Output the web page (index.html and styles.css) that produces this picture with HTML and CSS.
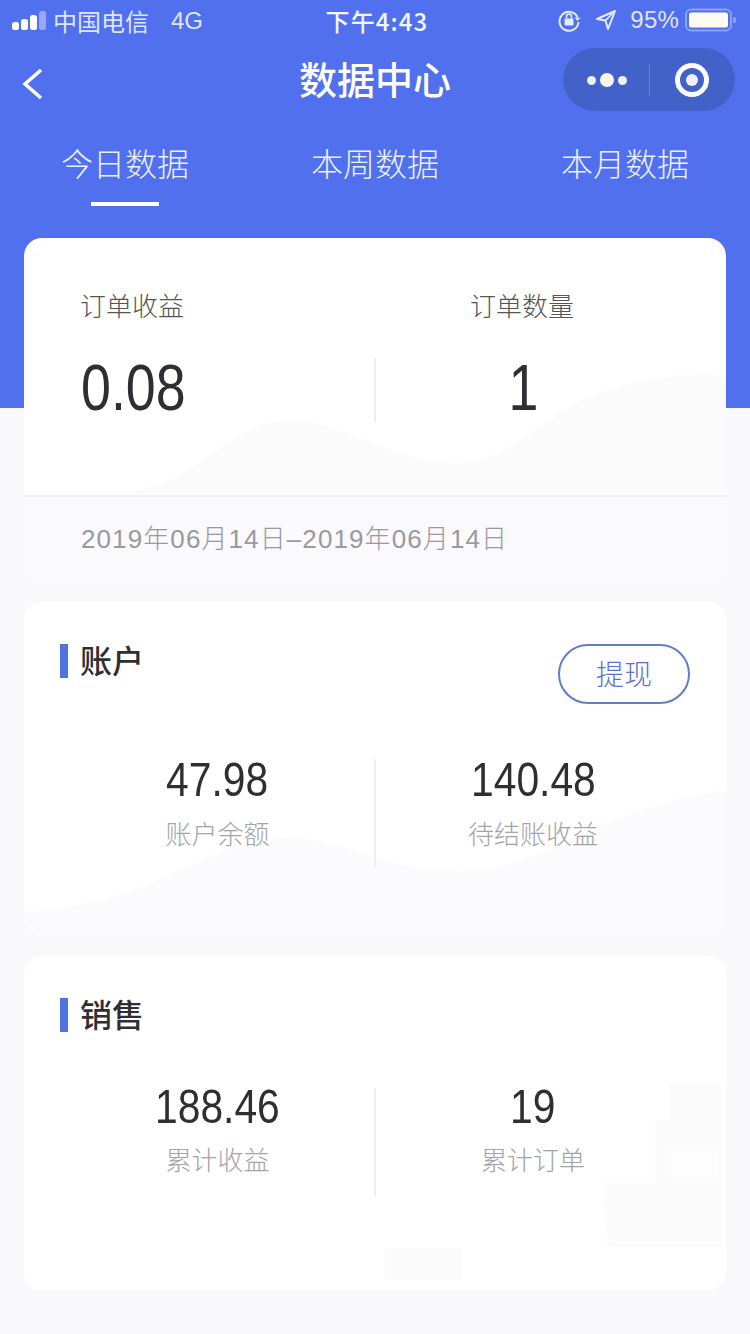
FILE: index.html
```html
<!DOCTYPE html>
<html lang="zh-CN">
<head>
<meta charset="utf-8">
<title>数据中心</title>
<link rel="stylesheet" href="styles.css">
</head>
<body>
<div class="page">
  <header class="hero">
    <div class="status">
      <div class="status-left">
        <svg class="signal" width="36" height="20" viewBox="0 0 36 20"><rect x="0" y="12" width="7" height="8" rx="2.5" fill="#fff"/><rect x="9" y="9" width="7" height="11" rx="2.5" fill="#fff"/><rect x="18" y="5" width="7" height="15" rx="2.5" fill="#fff"/><rect x="27" y="1" width="7" height="19" rx="2.5" fill="#fff" opacity=".4"/></svg>
        <span class="carrier">中国电信</span>
        <span class="net">4G</span>
      </div>
      <div class="time">下午4:43</div>
      <div class="status-right">
        <svg width="24" height="24" viewBox="0 0 24 24" fill="none"><path d="M20.5 9A9.5 9.5 0 1 0 21.5 14" stroke="#e6ebfb" stroke-width="2"/><path d="M23.5 9.5 20.5 13 17.5 9.5z" fill="#e6ebfb"/><rect x="7.5" y="10.5" width="9" height="7" rx="1" fill="#e6ebfb"/><path d="M9.5 10.5V8.5a2.5 2.5 0 0 1 5 0v2" stroke="#e6ebfb" stroke-width="1.6"/></svg>
        <svg class="arrow" width="22" height="22" viewBox="0 0 22 22" fill="none"><path d="M20 2 2 10l8.5 1.5L13 20z" stroke="#e6ebfb" stroke-width="2" stroke-linejoin="round"/><path d="M20 2 10.5 11.5" stroke="#e6ebfb" stroke-width="1.6"/></svg>
        <span class="pct">95%</span>
        <svg class="battery" width="52" height="24" viewBox="0 0 52 24"><rect x="1" y="1.5" width="45" height="21" rx="5" fill="none" stroke="#8ea2f2" stroke-width="2"/><rect x="4" y="4.5" width="39" height="15" rx="2.5" fill="#fffdf2"/><rect x="48" y="9" width="3" height="6" rx="1.5" fill="#8ea2f2"/></svg>
      </div>
    </div>
    <div class="nav">
      <svg class="back" width="26" height="38" viewBox="0 0 26 38" fill="none"><path d="M21 5 5 19l16 14" stroke="#fff" stroke-width="3.5"/></svg>
      <h1 class="nav-title">数据中心</h1>
      <div class="capsule">
        <div class="capsule-dots"><i class="dot"></i><i class="dot dot-big"></i><i class="dot"></i></div>
        <div class="capsule-target"><i class="target-dot"></i></div>
      </div>
    </div>
    <div class="tabs">
      <div class="tab tab-active">今日数据</div>
      <div class="tab">本周数据</div>
      <div class="tab">本月数据</div>
    </div>
  </header>

  <main class="cards">
    <section class="card card-today">
      <svg class="deco" width="702" height="344" viewBox="0 0 702 344"><path d="M96 257C120 250 143 249 175 225S235 182 263 182C320 182 370 225 431 225C490 225 525 170 576 155C620 140 660 134 702 137V257Z" fill="#fbfbfc"/></svg>
      <div class="today-grid">
        <div class="today-label">订单收益</div>
        <div class="today-label today-right">订单数量</div>
        <div class="today-value"><span class="num num-left">0.08</span></div>
        <div class="today-value today-right today-divider"><span class="num">1</span></div>
      </div>
      <div class="today-date">2019年06月14日–2019年06月14日</div>
    </section>

    <section class="card card-account">
      <svg class="deco" width="702" height="334" viewBox="0 0 702 334"><path d="M0 310C50 305 85 298 119 285C170 262 220 235 263 235C300 235 330 250 359 258S420 270 454 268C510 262 550 232 598 215C640 200 670 192 702 188V334H0Z" fill="#fbfbfe"/></svg>
      <div class="card-head">
        <h2 class="card-title">账户</h2>
        <div class="btn">提现</div>
      </div>
      <div class="stats">
        <div class="stat"><span class="num num-md">47.98</span><span class="stat-label">账户余额</span></div>
        <div class="stat stat-divider"><span class="num num-md">140.48</span><span class="stat-label">待结账收益</span></div>
      </div>
    </section>

    <section class="card card-sales">
      <svg class="deco" width="702" height="334" viewBox="0 0 702 334"><path d="M646 127H698V291H584L579 227H631V164H646Z" fill="#fbfbfc"/><rect x="646" y="191" width="48" height="33" fill="#fdfdfe"/><rect x="361" y="292" width="77" height="32" fill="#fbfbfc"/></svg>
      <div class="card-head card-head-sales">
        <h2 class="card-title">销售</h2>
      </div>
      <div class="stats">
        <div class="stat"><span class="num num-md">188.46</span><span class="stat-label">累计收益</span></div>
        <div class="stat stat-divider"><span class="num num-md">19</span><span class="stat-label">累计订单</span></div>
      </div>
    </section>
  </main>
</div>
</body>
</html>
```

FILE: styles.css
```css
* { box-sizing: border-box; }
html, body { margin: 0; padding: 0; }
body {
  background: #f9f9fb;
  font-family: "Noto Sans CJK SC", "Liberation Sans", sans-serif;
  color: #333;
}
.page { width: 750px; height: 1334px; overflow: hidden; }

/* hero */
.hero { height: 408px; background: #5070ee; color: #fff; }

.status {
  height: 40px;
  padding: 0 13px 0 12px;
  display: grid;
  grid-template-columns: 1fr auto 1fr;
  align-items: center;
  font-size: 24px;
  color: #dfe5fb;
  font-family: "Liberation Sans", "Noto Sans CJK SC", sans-serif;
}
.status-left { display: flex; align-items: center; }
.signal { margin-right: 5px; }
.carrier { font-family: "Noto Sans CJK SC", sans-serif; }
.net { margin-left: 22px; padding-top: 1px; }
.time {
  margin-left: 5px;
  color: #f4f6fe;
  font-family: "Noto Sans CJK SC", sans-serif;
  font-weight: 500;
  letter-spacing: 1.1px;
}
.status-right { display: flex; align-items: center; justify-content: flex-end; }
.arrow { margin-left: 14px; }
.pct { margin-left: 13px; letter-spacing: .2px; }
.battery { margin-left: 6px; }

.nav {
  height: 80px;
  position: relative;
  display: flex;
  align-items: center;
  justify-content: center;
  padding-bottom: 4px;
}
.back { position: absolute; left: 20px; top: 25px; }
.nav-title { margin: 0; font-size: 38px; font-weight: 500; line-height: 1; }
.capsule {
  position: absolute;
  left: 563px;
  top: 8px;
  width: 172px;
  height: 63px;
  border-radius: 32px;
  background: #4362c9;
  display: flex;
  align-items: center;
}
.capsule-dots {
  width: 87px;
  height: 32px;
  border-right: 1px solid #6a84d8;
  display: flex;
  align-items: center;
  justify-content: center;
  gap: 4px;
  padding-left: 2px;
  padding-top: 1px;
}
.dot { width: 9px; height: 9px; border-radius: 50%; background: #eef1fb; }
.dot-big { width: 14px; height: 14px; background: #fdf9e8; }
.capsule-target {
  margin-left: 25px;
  width: 34px;
  height: 34px;
  border-radius: 50%;
  border: 5px solid #fbfbfe;
  display: flex;
  align-items: center;
  justify-content: center;
}
.target-dot { width: 12px; height: 12px; border-radius: 50%; background: #eef0fb; }

.tabs { height: 86px; display: grid; grid-template-columns: repeat(3, 1fr); }
.tab {
  position: relative;
  text-align: center;
  font-size: 32px;
  line-height: 46px;
  padding-top: 19px;
  color: #eef1fd;
  font-weight: 300;
}
.tab-active::after {
  content: "";
  position: absolute;
  left: 91px;
  bottom: 0;
  width: 68px;
  height: 4px;
  background: #fff;
}

/* cards */
.cards {
  margin-top: -170px;
  padding: 0 24px;
  display: flex;
  flex-direction: column;
  gap: 20px;
  position: relative;
}
.card {
  position: relative;
  overflow: hidden;
  background: #fff;
  border-radius: 18px;
}
.deco { position: absolute; left: 0; top: 0; display: block; filter: blur(1px); }
.card-today { height: 344px; }
.card-account, .card-sales { height: 334px; }

.today-grid {
  position: relative;
  height: 257px;
  padding-top: 46px;
  display: grid;
  grid-template-columns: 351px 351px;
  grid-template-rows: 42px 64px;
  row-gap: 32px;
  align-content: start;
}
.today-label {
  padding-left: 56px;
  font-size: 26px;
  line-height: 42px;
  font-weight: 300;
  color: #555;
}
.today-label.today-right { padding-left: 95px; }
.today-value { padding-left: 57px; display: flex; align-items: center; }
.today-right.today-value { padding-left: 96px; width: 100%; }
.today-divider { border-left: 2px solid #efeff1; margin-left: -1px; }
.today-divider .num { width: 103px; text-align: center; }
.today-value .num { margin-top: -4px; }
.today-date {
  position: relative;
  height: 87px;
  padding-left: 57px;
  border-top: 2px solid #f1f1f4;
  background: #fafafc;
  font-size: 26px;
  line-height: 84px;
  font-weight: 300;
  color: #99999f;
  letter-spacing: 1.1px;
  white-space: nowrap;
  font-family: "Liberation Sans", "Noto Sans CJK SC", sans-serif;
}

.num {
  display: inline-block;
  font-family: "Liberation Sans", sans-serif;
  font-size: 64px;
  line-height: 64px;
  color: #2f2f33;
  transform: scaleX(.84);
}
.num-left { transform-origin: left center; }
.num-md { font-size: 48px; line-height: 48px; transform: scaleX(.85); }

.card-head {
  position: relative;
  height: 102px;
  padding: 42px 36px 0;
  display: flex;
  justify-content: space-between;
  align-items: flex-start;
}
.card-head-sales { height: 76px; }
.card-title {
  margin: 0;
  height: 34px;
  padding-left: 12px;
  border-left: 8px solid #4f73e0;
  font-size: 32px;
  line-height: 30px;
  font-weight: 500;
  color: #2f2f33;
}
.btn {
  width: 132px;
  height: 60px;
  border: 2px solid #5f7dc8;
  border-radius: 30px;
  text-align: center;
  font-size: 28px;
  line-height: 54px;
  color: #5a73c8;
  font-weight: 300;
  background: #fff;
}
.stats {
  position: relative;
  margin-top: 55px;
  padding: 0 36px;
  display: grid;
  grid-template-columns: 315px 315px;
}
.stat {
  height: 108px;
  display: flex;
  flex-direction: column;
  align-items: center;
}
.stat-divider { border-left: 2px solid #efeff1; margin-left: -1px; }
.stat .num { margin-top: -3px; }
.stat-label {
  margin-top: 7px;
  font-size: 26px;
  line-height: 44px;
  font-weight: 300;
  color: #a3a3a8;
}
.card-sales .stats { margin-top: 56px; }
.card-sales .stat .num { margin-top: -5px; }
.card-sales .stat-label { margin-top: 6px; }
```
